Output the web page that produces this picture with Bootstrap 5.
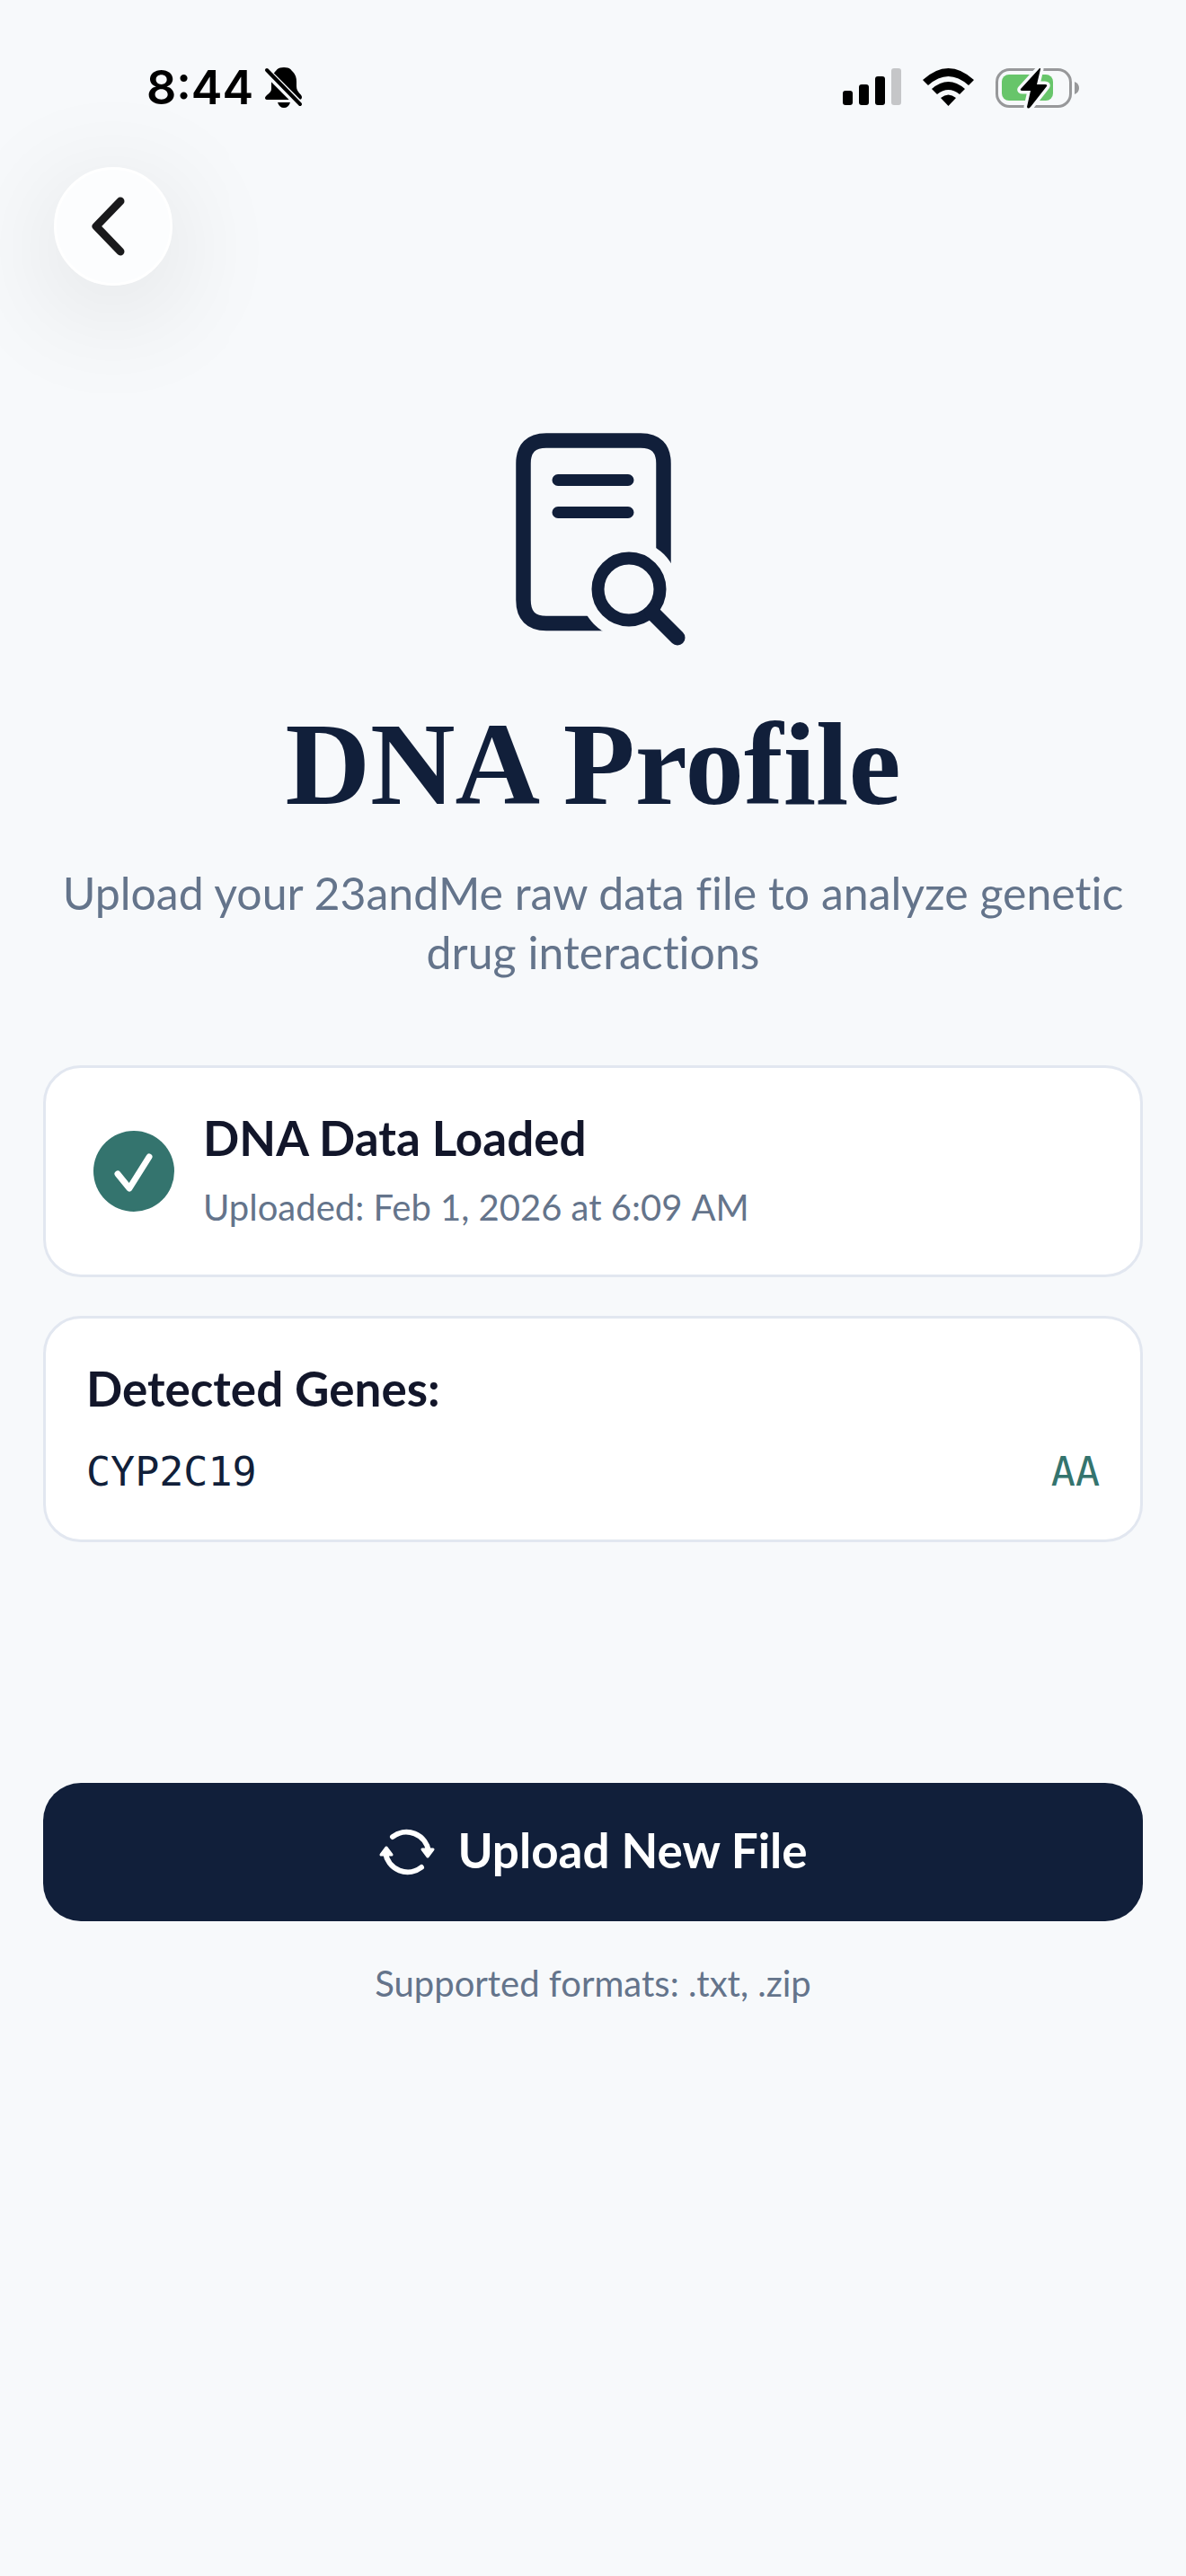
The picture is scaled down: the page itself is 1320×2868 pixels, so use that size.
<!DOCTYPE html>
<html lang="en">
<head>
<meta charset="utf-8">
<meta name="viewport" content="width=device-width, initial-scale=1">
<title>DNA Profile</title>
<link href="https://cdn.jsdelivr.net/npm/bootstrap@5.3.0/dist/css/bootstrap.min.css" rel="stylesheet">
<style>
:root { --navy: #111f3a; --ink: #12162a; --slate: #64748b; --teal: #34746e; --line: #e2e7f0; }
body { background: #f7f9fb; font-family: Lato, "Liberation Sans", sans-serif; font-variant-ligatures: none; color: var(--ink); }
svg { display: block; flex: none; }
.status-bar { height: 186px; padding: 72px 118px 0 163px; color: #000; }
.clock { font: 600 52px/52px Inter, sans-serif; margin-right: 12px; }
.back-btn { width: 132px; height: 132px; margin-left: 60px; background: #fcfdfe; border: 3px solid #fff; box-shadow: 0 24px 130px rgba(0,0,0,.12); }
.doc-icon { margin-top: 164px; margin-bottom: 62px; }
.page-title { font: 700 131px/140px "Liberation Serif", serif; font-variant-ligatures: none; color: var(--navy); margin-bottom: 40px; }
.intro { font-size: 50px; line-height: 66px; color: var(--slate); margin-bottom: 93px; }
.screen { padding: 0 48px; }
.panel { border: 3px solid var(--line); border-radius: 42px; padding: 48px 45px; background: #fff; }
.panels { gap: 43px; }
.label-lg { font-size: 53px; line-height: 60px; font-weight: 700; margin: 0; }
.label-sm { font-size: 40px; line-height: 54px; color: var(--slate); margin: 0; }
.loaded { gap: 24px; }
.loaded .label-sm { margin-top: 20px; }
.genes { font: 45px/54px "DejaVu Sans Mono", monospace; color: var(--navy); margin: 36px 0 0; }
.genes dt { font-weight: 400; }
.genes dd { margin: 0; color: var(--teal); }
.upload-btn { margin-top: 268px; height: 154px; border-radius: 42px; background: var(--navy); color: #fff; gap: 24px; }
.upload-btn:hover { background: #1b2d50; color: #fff; }
.formats { margin-top: 42px; }
</style>
</head>
<body>
<header>
  <div class="status-bar d-flex justify-content-between align-items-start">
    <div class="d-flex align-items-center">
      <span class="clock">8:44</span>
      <svg width="44" height="48" viewBox="0 0 44 48" role="img" aria-label="Silent">
        <path d="M22 1C15 1 14 4 12 6Q8 10 8 18V25C8 30 1 32 1 35Q1 37 4 37H39Q42 37 42 34C42 31 36 29 36 22V17Q36 10 32 6C30 4 29 1 22 1Z"/>
        <path d="M15 40H29Q27 46 22 46Q17 46 15 40Z"/>
        <path d="M2 5L41 44" stroke="#f7f9fb" stroke-width="9"/>
        <path d="M3 4L40 42" stroke="#000" stroke-width="4" stroke-linecap="round"/>
      </svg>
    </div>
    <div class="d-flex align-items-start pt-1">
      <svg width="65" height="41" viewBox="0 0 65 41" role="img" aria-label="Signal">
        <rect y="25" width="11" height="16" rx="3"/><rect x="18" y="18" width="11" height="23" rx="3"/><rect x="36" y="9" width="11" height="32" rx="3"/><rect x="54" width="11" height="41" rx="3" fill="#c5c6c8"/>
      </svg>
      <svg class="ms-4" width="57" height="42" viewBox="0 0 57 42" role="img" aria-label="Wi-Fi">
        <path d="M0 13Q28.500 -13 57 13L51 19Q28.500 -1 6 19Z"/>
        <path d="M10 23Q28.500 7 47 23L41 29Q28.500 19 16 29Z"/>
        <path d="M20 33Q28.500 26 37 33L28.500 42Z"/>
      </svg>
      <svg class="ms-4" width="94" height="46" viewBox="0 0 94 46" role="img" aria-label="Battery charging">
        <rect x="1.500" y="1.500" width="82" height="41" rx="14" fill="none" stroke="#97989a" stroke-width="3"/>
        <path d="M88 15Q93 17 93 22Q93 27 88 29Z" fill="#97989a"/>
        <rect x="7" y="7" width="57" height="29" rx="8" fill="#67c56a"/>
        <path d="M49 0L28 23Q27 25 30 25H39L35 43Q36 46 39 43L57 20Q58 18 55 18H46L50 1Q50 -1 49 0Z" stroke="#f7f9fb" stroke-width="7" paint-order="stroke" stroke-linejoin="round"/>
      </svg>
    </div>
  </div>
  <button type="button" class="back-btn btn rounded-circle d-flex align-items-center justify-content-center p-0" aria-label="Back">
    <svg width="48" height="68" viewBox="0 0 48 68" fill="none" stroke="#1a1a1c" stroke-width="9" stroke-linecap="round" stroke-linejoin="round"><path d="M32 6L5 34L32 62"/></svg>
  </button>
</header>
<main class="screen">
  <svg class="doc-icon mx-auto" width="208" height="237" viewBox="-18 0 208 237" fill="none" stroke="#111f3a" aria-hidden="true">
    <path d="M164.500 145V34Q164.500 8.500 139 8.500H34Q8.500 8.500 8.500 34V186Q8.500 212 34 212H97" stroke-width="16.500"/>
    <path d="M47 52.500H125M47 88.500H125" stroke-width="13" stroke-linecap="round"/>
    <circle cx="126" cy="174" r="55" fill="#f7f9fb" stroke="none"/>
    <circle cx="126" cy="174" r="34.500" stroke-width="14"/>
    <path d="M152 200L180 228" stroke-width="17" stroke-linecap="round"/>
  </svg>
  <h1 class="page-title text-center">DNA Profile</h1>
  <p class="intro text-center">Upload your 23andMe raw data file to analyze genetic drug interactions</p>
  <div class="panels d-flex flex-column">
    <section class="panel loaded d-flex align-items-center">
      <svg width="106" height="100" viewBox="-3 0 106 100" aria-hidden="true"><circle cx="50" cy="50" r="45" fill="#34746e"/><path d="M32 53L45 69L67 34" fill="none" stroke="#fff" stroke-width="7" stroke-linecap="round" stroke-linejoin="round"/></svg>
      <div>
        <h2 class="label-lg">DNA Data Loaded</h2>
        <p class="label-sm">Uploaded: Feb 1, 2026 at 6:09&#8239;AM</p>
      </div>
    </section>
    <section class="panel">
      <h2 class="label-lg">Detected Genes:</h2>
      <dl class="genes d-flex justify-content-between"><dt>CYP2C19</dt><dd>AA</dd></dl>
    </section>
  </div>
  <button type="button" class="upload-btn btn border-0 w-100 d-flex align-items-center justify-content-center">
    <svg width="64" height="56" viewBox="0 0 64 56" fill="none" stroke="#fff" stroke-width="6" stroke-linecap="round" aria-hidden="true">
      <path d="M16 11A25 25 0 0 1 56 27M48 45A25 25 0 0 1 8 29"/>
      <path d="M49 25H61L55 33ZM3 31H15L9 23Z" fill="#fff" stroke-width="3" stroke-linejoin="round"/>
    </svg>
    <span class="label-lg pb-1">Upload New File</span>
  </button>
  <p class="label-sm formats text-center">Supported formats: .txt, .zip</p>
</main>
<script src="https://cdn.jsdelivr.net/npm/bootstrap@5.3.0/dist/js/bootstrap.bundle.min.js"></script>
</body>
</html>
